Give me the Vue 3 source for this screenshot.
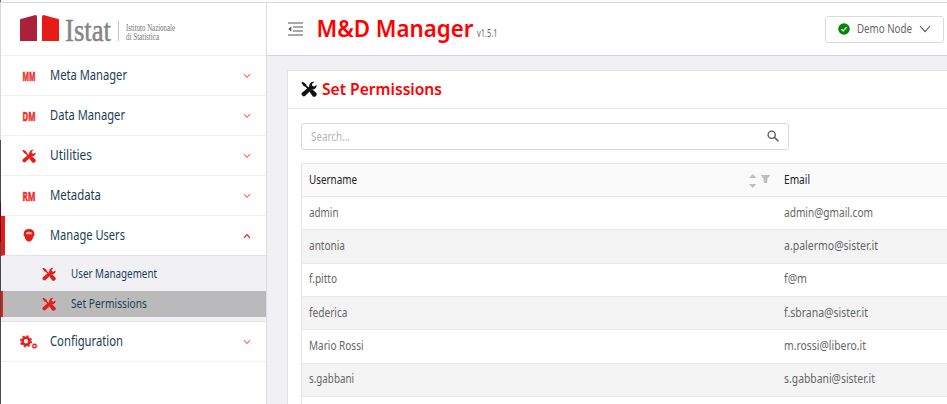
<script setup>
import { h } from 'vue'

// Single line of text drawn at an exact width on a 20px tall line.
const FitText = (props) =>
  h('svg', { width: Number(props.w) + 1, height: 20, class: 'fit' }, [
    h('text', { x: 0, y: 14, textLength: props.w, lengthAdjust: 'spacingAndGlyphs' }, props.t)
  ])
FitText.props = ['t', 'w']

const Tools = () =>
  h('svg', { viewBox: '0 0 16 16', class: 'tools', fill: 'currentColor', stroke: 'currentColor' }, [
    h('path', { d: 'M.4 1.800 1.700.8 5.200 3.200l.3 1.300 2.800 2.800-1.200 1.200-3-3L2.800 5.200z', stroke: 'none' }),
    h('path', { d: 'M9.200 10.600 11 9 14.600 12.200a1.800 1.800 0 0 1-2.400 2.600z', 'stroke-width': 1.4 }),
    h('path', { d: 'M15.700 4 13.100 5.400 11.300 4.900 11 3.100 13.200.9A4.300 4.300 0 0 0 8.200 5.800L1.300 11.500a2.100 2.100 0 0 0 3 3.200L10.600 8.500A4.300 4.300 0 0 0 15.700 4Z', stroke: 'none' })
  ])

const Chevron = () =>
  h('svg', { viewBox: '0 0 8 6', class: 'chev', fill: 'none', stroke: 'currentColor' }, [
    h('path', { d: 'M1 1.2 4 4.3 7 1.2', 'stroke-width': 1.2 })
  ])

const items = [
  { t: 'Meta Manager', w: 77, badge: 'MM' },
  { t: 'Data Manager', w: 75, badge: 'DM' },
  { t: 'Utilities', w: 42, icon: 'tools' },
  { t: 'Metadata', w: 51, badge: 'RM' },
  {
    t: 'Manage Users', w: 75, icon: 'user', open: true,
    children: [
      { t: 'User Management', w: 86 },
      { t: 'Set Permissions', w: 76, active: true }
    ]
  },
  { t: 'Configuration', w: 73, icon: 'gears' }
]

const users = [
  ['admin', 29.5, 'admin@gmail.com', 89],
  ['antonia', 36, 'a.palermo@sister.it', 94],
  ['f.pitto', 28, 'f@m', 23],
  ['federica', 38.5, 'f.sbrana@sister.it', 84],
  ['Mario Rossi', 54.5, 'm.rossi@libero.it', 82],
  ['s.gabbani', 45, 's.gabbani@sister.it', 91],
  ['', 1, '', 1]
]
</script>

<template>
  <div class="page">
    <div class="edge"><i class="e1"></i><i class="e2"></i><i class="e3"></i><i class="e4"></i><i class="e5"></i></div>
    <aside class="side">
      <div class="logo">
        <svg width="220" height="52" viewBox="0 0 220 52">
          <path d="M19 16.2 34.5 12q1.500 0 1.500 1.500V38H19z" fill="#ab213b" />
          <path d="M41 13.500Q41 12 42.500 12L58 16.200V38H41z" fill="#e51c18" />
          <text class="brand" x="64" y="37.500" textLength="46" lengthAdjust="spacingAndGlyphs">Istat</text>
          <path d="M117.500 18v20" stroke="#c4c4c4" />
          <text class="tag" x="125" y="28" textLength="49" lengthAdjust="spacingAndGlyphs">Istituto Nazionale</text>
          <text class="tag" x="125" y="37" textLength="33" lengthAdjust="spacingAndGlyphs">di Statistica</text>
        </svg>
      </div>
      <template v-for="m in items" :key="m.t">
        <div class="item" :class="{ open: m.open }">
          <span class="ico">
            <svg v-if="m.badge" class="mono" width="24" height="20">
              <text class="badge" x="5.500" y="14.500" textLength="13" lengthAdjust="spacingAndGlyphs">{{ m.badge }}</text>
            </svg>
            <Tools v-else-if="m.icon === 'tools'" />
            <svg v-else-if="m.icon === 'user'" width="12" height="13" viewBox="0 0 12 13">
              <path d="M6 0C2.500 0 .800 2 .800 4.300L.500 6.500l1.100 1C2 10.500 4 12.700 6 12.700s4-2.200 4.400-5.200l1.100-1-.300-2.200C11.200 2 9.500 0 6 0Z" fill="#e51c18" />
              <path d="M3.200 3.400Q6 2.200 8.800 3.400L9 5.200H3z" fill="#f6b4b2" />
            </svg>
            <svg v-else class="gears" width="18" height="14" viewBox="0 0 18 14" fill="none" stroke="#e51c18">
              <circle cx="6" cy="6.300" r="3.500" stroke-width="2.600" />
              <circle cx="6" cy="6.300" r="5.200" stroke-width="1.800" stroke-dasharray="2.040 2.040" />
              <circle cx="14.500" cy="11" r="1.700" stroke-width="1.300" />
              <circle cx="14.500" cy="11" r="2.500" stroke-width=".700" stroke-dasharray="1 .960" />
            </svg>
          </span>
          <FitText class="label" :t="m.t" :w="m.w" />
          <Chevron />
        </div>
        <div v-if="m.children" class="sub">
          <div v-for="c in m.children" :key="c.t" class="subitem" :class="{ active: c.active }">
            <Tools />
            <FitText class="sublabel" :t="c.t" :w="c.w" />
          </div>
        </div>
      </template>
    </aside>
    <main class="main">
      <header class="top">
        <svg class="fold" width="15" height="14" viewBox="0 0 15 14">
          <path d="M0 1h15M5 5h10M5 9h10M0 13h15" stroke="#555" stroke-width="1.200" />
          <path d="M3.300 4.600v4.800L.300 7z" fill="#555" />
        </svg>
        <svg class="title" width="160" height="36">
          <text class="name" x="-.5" y="24" textLength="157" lengthAdjust="spacingAndGlyphs">M&amp;D Manager</text>
        </svg>
        <svg class="title" width="40" height="36">
          <text class="ver" x="0" y="24" textLength="20.500" lengthAdjust="spacingAndGlyphs">v1.5.1</text>
        </svg>
        <div class="node">
          <svg width="12" height="12" viewBox="0 0 12 12">
            <circle cx="6" cy="6" r="5.800" fill="#078507" />
            <path d="M3.300 6.200 5.200 8 8.700 4.200" fill="none" stroke="#fff" stroke-width="1.200" />
          </svg>
          <FitText class="cell" t="Demo Node" w="55" />
          <svg width="12" height="8" viewBox="0 0 12 8"><path d="M1 1 6 6.600 11 1" fill="none" stroke="#555" stroke-width="1.100" /></svg>
        </div>
      </header>
      <section class="card">
        <div class="cardhead">
          <Tools />
          <FitText class="heading" t="Set Permissions" w="120" />
        </div>
        <div class="body">
          <div class="search">
            <FitText class="cell" t="Search..." w="39" />
            <svg width="12" height="12" viewBox="0 0 12 12" fill="none" stroke="#555">
              <circle cx="4.700" cy="4.700" r="3.600" stroke-width="1.300" />
              <path d="m7.300 7.300 4 4" stroke-width="1.600" />
            </svg>
          </div>
          <div class="table">
            <div class="row thead">
              <div class="col">
                <FitText class="cell" t="Username" w="48" />
                <svg class="sort" width="22" height="16" viewBox="0 0 22 16" fill="#bfbfbf">
                  <path d="M0 5 3.700 1l3.700 4zM0 11h7.400L3.700 15zM11.500 2h10L18 6.300h-3zM14.700 6.300h3.600v3.800h-3.600z" />
                </svg>
              </div>
              <div class="col"><FitText class="cell" t="Email" w="26" /></div>
            </div>
            <div v-for="(u, i) in users" :key="i" class="row">
              <div class="col"><FitText class="cell" :t="u[0]" :w="u[1]" /></div>
              <div class="col"><FitText class="cell" :t="u[2]" :w="u[3]" /></div>
            </div>
          </div>
        </div>
      </section>
    </main>
  </div>
</template>

<style>
body { background: #fff; overflow: hidden; }
</style>

<style scoped>
.page { display: flex; width: 947px; height: 404px; overflow: hidden; background: #fff; font-family: "Noto Sans", "Open Sans", sans-serif; font-stretch: condensed; box-sizing: border-box; }
.page * { box-sizing: border-box; }
.edge { width: 1px; flex: none; display: flex; flex-direction: column; }
.e1 { height: 2px; background: #e5403c; }
.e2 { height: 138px; background: #d5d5de; }
.e3 { height: 62px; background: #4a4a4a; }
.e4 { height: 40px; background: #650b0b; }
.e5 { flex: 1; background: #4a4a4a; }
.side { width: 266px; flex: none; margin-top: 2px; border-top: 1px solid #dadada; border-right: 1px solid #dcdce0; color: #203e52; }
.logo { height: 53px; border-bottom: 1px solid #efefef; }
.logo svg { display: block; }
.fit { display: block; flex: none; fill: currentColor; overflow: visible; }
.brand { font: 31px "Liberation Serif", serif; fill: #858585; stroke: #858585; stroke-width: .5px; }
.tag { font: 9.500px "Liberation Serif", serif; fill: #777; }
.item { height: 40px; display: flex; align-items: center; padding: 0 15px 0 15px; border-bottom: 1px solid #efefef; }
.item.open { border-left: 4px solid #e51c18; padding-left: 11px; border-bottom-color: #e2e4e4; }
.ico { width: 25px; display: flex; justify-content: center; color: #e51c18; margin-right: 9px; }
.gears { margin-left: 1px; }
.mono { flex: none; overflow: visible; }
.badge { font: bold 13px "Noto Sans", sans-serif; fill: #e8302d; stroke: #e8302d; stroke-width: .6px; }
.tools { width: 14px; height: 14px; flex: none; }
.label { font-size: 14.300px; }
.chev { width: 8px; height: 6px; margin-left: auto; color: #ef7571; }
.open .chev { transform: rotate(180deg); color: #e51c18; }
.sub { background: #f0f0f5; padding: 1px 0 4px; border-bottom: 1px solid #e2e4e4; height: 66px; }
.subitem { height: 34px; display: flex; align-items: center; padding-left: 41px; gap: 15px; color: #e51c18; }
.subitem.active { height: 26px; background: #bababa; border-left: 2px solid #e51c18; padding-left: 39px; }
.sublabel { font-size: 12.700px; color: #203e52; }
.main { flex: 1; min-width: 0; margin-top: 2px; border-top: 1px solid #dadada; background: #f0f0f5; }
.top { height: 53px; background: #fff; border-bottom: 1px solid #d4d4d6; display: flex; align-items: center; padding: 0 3px 0 21px; }
.fold { margin-right: 14px; }
.title { margin-top: 4px; overflow: visible; }
.name { font-size: 24px; font-weight: 600; fill: #f00; }
.ver { font-size: 10.500px; fill: #666; }
.node { margin-left: auto; width: 119px; height: 27px; border: 1px solid #d9d9d9; border-radius: 3px; background: #fff; display: flex; align-items: center; padding: 0 0 0 12px; color: #666; }
.node svg { flex: none; }
.node .fit { margin: 0 6px 0 7px; }
.card { margin: 14px 0 0 20px; width: 700px; height: 340px; background: #fff; border: 1px solid #e3e3e5; }
.cardhead { height: 38px; border-bottom: 1px solid #e8e8e8; display: flex; align-items: center; padding-left: 13px; gap: 5px; color: #111; }
.cardhead .tools { width: 16px; height: 16px; margin-top: -2px; }
.heading { font-size: 16px; font-weight: 600; color: #f00; margin-top: 2px; }
.body { padding: 14px 0 0 13px; }
.search { width: 488px; height: 27px; border: 1px solid #d9d9d9; border-radius: 3px; display: flex; align-items: center; justify-content: space-between; padding: 0 9px; color: #b5b5b5; }
.search svg:last-child { margin-top: -1px; }
.cell { font-size: 12.700px; }
.table { margin-top: 13px; border: 1px solid #e8e8e8; color: #666; }
.row { height: 33.333px; display: grid; grid-template-columns: 475px 1fr; border-bottom: 1px solid #e8e8e8; }
.row .fit { margin-top: -1px; }
.thead { height: 33px; background: #fafafa; color: #222; }
.row:nth-child(odd):not(.thead) { background: #f4f4f4; }
.col { display: flex; align-items: center; padding-left: 7px; }
.sort { margin: 1px 6px 0 auto; }
</style>
